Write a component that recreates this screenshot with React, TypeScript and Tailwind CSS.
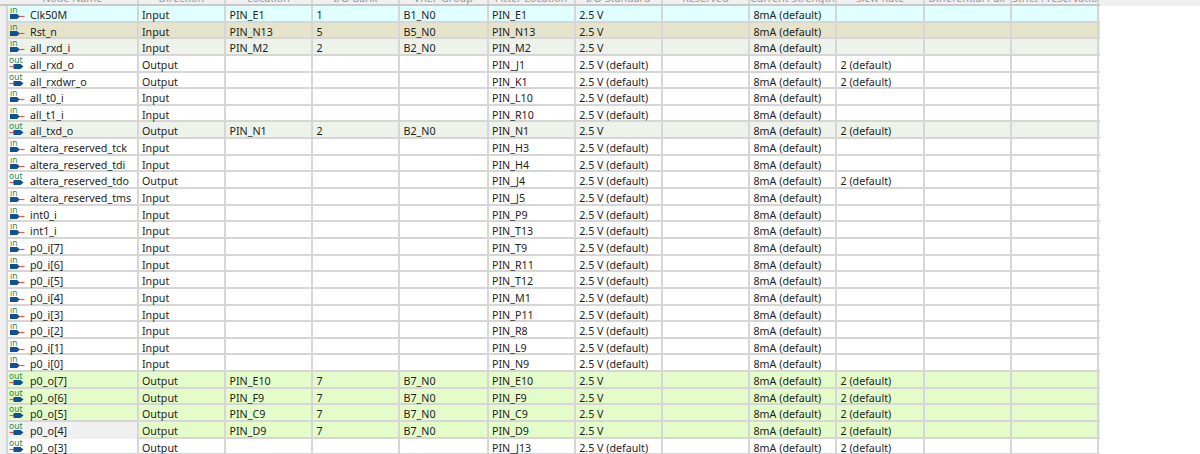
type Row = {
    name: string;
    dir: 'Input' | 'Output';
    loc?: string;
    bank?: string;
    vref?: string;
    fitter: string;
    std?: boolean;
    slew?: boolean;
    bg?: string;
};

const inRow = (name: string, fitter: string): Row => ({ name, dir: 'Input', fitter });
const outRow = (name: string, fitter: string): Row => ({ name, dir: 'Output', fitter, slew: true });
const green = (name: string, pin: string): Row => ({
    name,
    dir: 'Output',
    loc: pin,
    bank: '7',
    vref: 'B7_N0',
    fitter: pin,
    std: true,
    slew: true,
    bg: 'bg-[#e3fcc9]',
});

const rows: Row[] = [
    { name: 'Clk50M', dir: 'Input', loc: 'PIN_E1', bank: '1', vref: 'B1_N0', fitter: 'PIN_E1', std: true, bg: 'bg-[#e1ffff]' },
    { name: 'Rst_n', dir: 'Input', loc: 'PIN_N13', bank: '5', vref: 'B5_N0', fitter: 'PIN_N13', std: true, bg: 'bg-[#e5e4cb]' },
    { name: 'all_rxd_i', dir: 'Input', loc: 'PIN_M2', bank: '2', vref: 'B2_N0', fitter: 'PIN_M2', std: true, bg: 'bg-[#edf3ea]' },
    outRow('all_rxd_o', 'PIN_J1'),
    outRow('all_rxdwr_o', 'PIN_K1'),
    inRow('all_t0_i', 'PIN_L10'),
    inRow('all_t1_i', 'PIN_R10'),
    { name: 'all_txd_o', dir: 'Output', loc: 'PIN_N1', bank: '2', vref: 'B2_N0', fitter: 'PIN_N1', std: true, slew: true, bg: 'bg-[#edf3ea]' },
    inRow('altera_reserved_tck', 'PIN_H3'),
    inRow('altera_reserved_tdi', 'PIN_H4'),
    outRow('altera_reserved_tdo', 'PIN_J4'),
    inRow('altera_reserved_tms', 'PIN_J5'),
    inRow('int0_i', 'PIN_P9'),
    inRow('int1_i', 'PIN_T13'),
    inRow('p0_i[7]', 'PIN_T9'),
    inRow('p0_i[6]', 'PIN_R11'),
    inRow('p0_i[5]', 'PIN_T12'),
    inRow('p0_i[4]', 'PIN_M1'),
    inRow('p0_i[3]', 'PIN_P11'),
    inRow('p0_i[2]', 'PIN_R8'),
    inRow('p0_i[1]', 'PIN_L9'),
    inRow('p0_i[0]', 'PIN_N9'),
    green('p0_o[7]', 'PIN_E10'),
    green('p0_o[6]', 'PIN_F9'),
    green('p0_o[5]', 'PIN_C9'),
    green('p0_o[4]', 'PIN_D9'),
    outRow('p0_o[3]', 'PIN_J13'),
];

const headers = ['Node Name', 'Direction', 'Location', 'I/O Bank', 'VREF Group', 'Fitter Location', 'I/O Standard', 'Reserved', 'Current Strength', 'Slew Rate', 'Differential Pair', 'Strict Preservation'];

// column edges measured off the grid lines, they are not quite even
const cols = 'grid grid-cols-[8px_130.5px_87.5px_87px_87px_88.5px_87.2px_87px_87.3px_87px_88px_87px_87px]';

function PinIcon({ out }: { out: boolean }) {
    if (out) {
        return (
            <svg width="16" height="15" viewBox="0 0 16 15" className="shrink-0 -ml-[1px] -mt-[1px]">
                <text x="0" y="5.5" fontSize="8.5" fontFamily="Noto Sans" fill="#2c8a3a">out</text>
                <path d="M0.5 9.5h5" stroke="#e4564e" strokeWidth="1.2" />
                <path d="M4.5 7h7l3 2.5-3 2.5h-7z" fill="#12508f" />
            </svg>
        );
    }
    return (
        <svg width="16" height="15" viewBox="0 0 16 15" className="shrink-0 -ml-[1px] -mt-[1px]">
            <text x="1" y="5.5" fontSize="8.5" fontFamily="Noto Sans" fill="#2c8a3a">in</text>
            <path d="M1 7h7l3 2.5-3 2.5H1z" fill="#12508f" />
            <path d="M10.5 9.5h5" stroke="#e4564e" strokeWidth="1.2" />
        </svg>
    );
}

function Cell({ children }: { children?: React.ReactNode }) {
    return (
        <div className="border-r-2 border-[#d6d6d6] pl-[3.5px] pt-[2px] overflow-hidden whitespace-nowrap">
            {children}
        </div>
    );
}

export default function App() {
    return (
        <div className="w-[1200px] h-[454px] bg-white overflow-hidden text-[10.7px] leading-[15px] text-[#1e1e1e] font-['Noto_Sans',sans-serif]">
            {/* header scrolled almost out of view */}
            <div className="h-[6px] bg-[#f0f0f0] overflow-hidden">
                <div className={`${cols} w-[1100px] h-[6px] border-b-2 border-[#c9c9c9]`}>
                    <div />
                    {headers.map((h) => (
                        <div key={h} className="border-r-2 border-[#d6d6d6] text-center text-[#9a9a9a] -mt-[9px] whitespace-nowrap overflow-hidden">{h}</div>
                    ))}
                </div>
            </div>

            {rows.map((r) => (
                <div key={r.name} className={`${cols} w-[1100px] h-[16.65px] border-b-2 border-[#d6d6d6] ${r.bg ?? 'bg-white'}`}>
                    <div className="bg-[#f0f0f0] border-r-2 border-[#d6d6d6]" />
                    <div className={`border-r-2 border-[#d6d6d6] pl-[2px] flex items-start gap-[5px] pt-[2px] ${r.name === 'p0_o[4]' ? 'bg-[#f0f0f0]' : ''}`}>
                        <PinIcon out={r.dir === 'Output'} />
                        <span>{r.name}</span>
                    </div>
                    <Cell>{r.dir}</Cell>
                    <Cell>{r.loc}</Cell>
                    <Cell>{r.bank}</Cell>
                    <Cell>{r.vref}</Cell>
                    <Cell>{r.fitter}</Cell>
                    <Cell>{r.std ? '2.5 V' : '2.5 V (default)'}</Cell>
                    <Cell />
                    <Cell>8mA (default)</Cell>
                    <Cell>{r.slew ? '2 (default)' : ''}</Cell>
                    <Cell />
                    <Cell />
                </div>
            ))}
        </div>
    );
}
